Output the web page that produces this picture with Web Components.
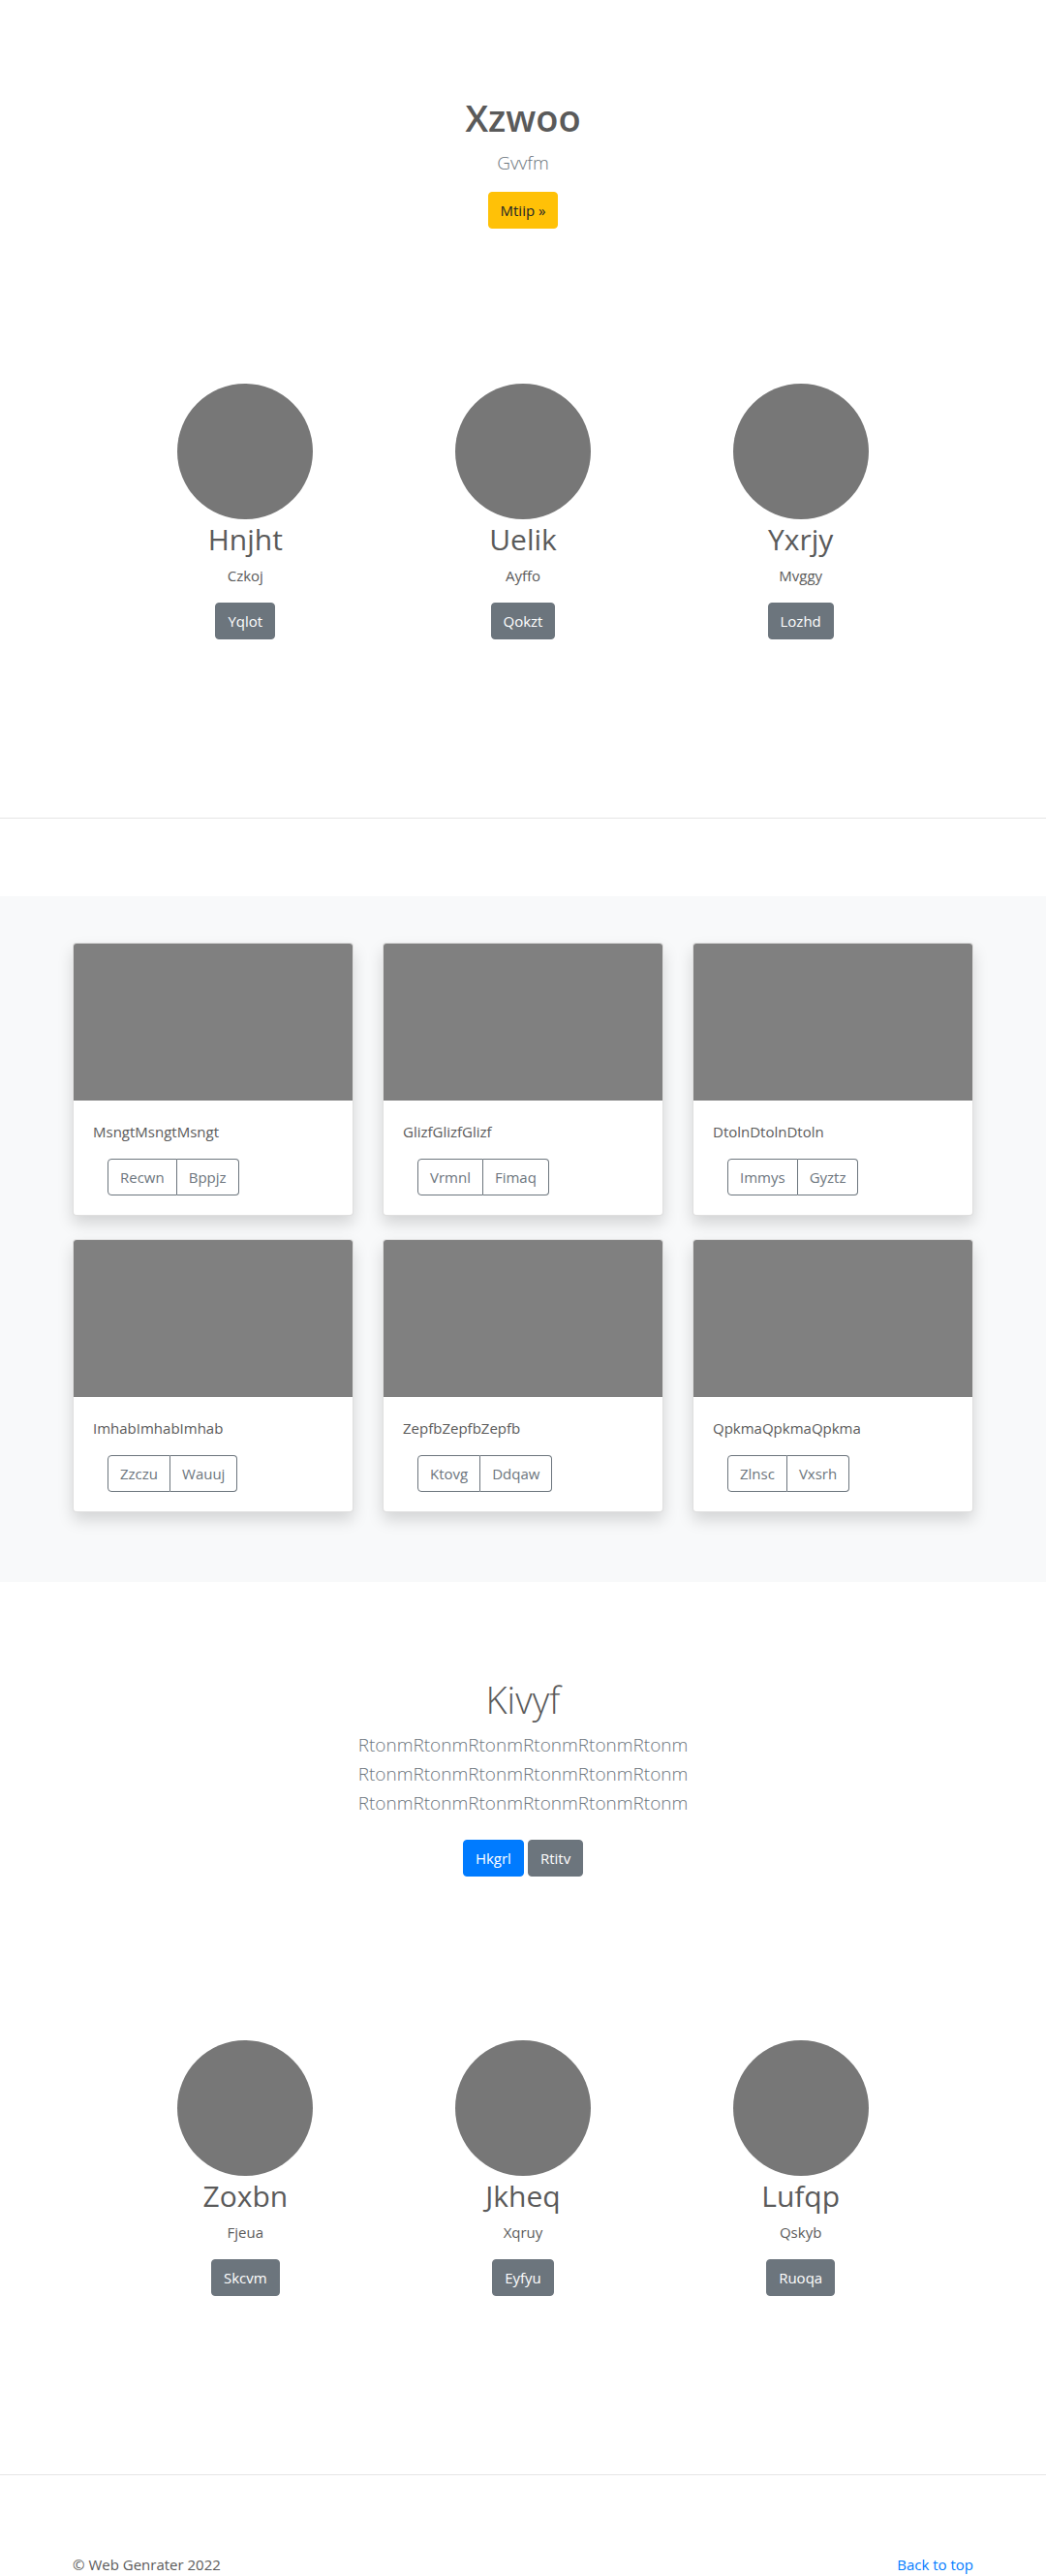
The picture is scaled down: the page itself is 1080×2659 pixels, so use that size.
<!DOCTYPE html>
<html lang="en">
<head>
<meta charset="utf-8">
<title>Web Genrater</title>
<style>
  body { margin: 0; background: #fff; color: #5a5a5a; font: 400 15px/24px "Open Sans", "Noto Sans", sans-serif; }
</style>
</head>
<body>
<site-page></site-page>
<script>
const define = (name, html) => customElements.define(name, class extends HTMLElement {
  constructor() {
    super();
    const t = document.createElement('template');
    t.innerHTML = html;
    this.attachShadow({ mode: 'open' }).append(t.content.cloneNode(true));
  }
});

define('ui-button', `
<style>
  :host { display: inline-flex; }
  button { font: inherit; line-height: 24px; color: #fff; background: #6c757d; border: 1px solid #6c757d; border-radius: 4px; padding: 6px 12px; margin: 0; cursor: pointer; white-space: nowrap; }
  :host([kind=primary]) button { background: #007bff; border-color: #007bff; }
  :host([kind=warning]) button { background: #ffc107; border-color: #ffc107; color: #212529; }
  :host([kind=outline]) button { background: transparent; color: #6c757d; }
  :host([side=start]) button { border-radius: 4px 0 0 4px; }
  :host([side=end]) button { border-radius: 0 4px 4px 0; border-left: 0; }
</style>
<button type="button"><slot></slot></button>`);

define('hero-block', `
<style>
  :host { display: block; padding: 96px 16px; text-align: center; }
  h1 { margin: 0 0 6px; font-size: 38px; line-height: 51px; font-weight: var(--title-weight, 600); }
  p { margin: 0 0 var(--lead-gap, 15px); font-size: 19px; line-height: 30px; font-weight: 300; color: #6c757d; }
  .actions { display: flex; justify-content: center; gap: 4px; }
</style>
<h1><slot name="title"></slot></h1>
<p><slot name="lead"></slot></p>
<div class="actions"><slot></slot></div>`);

define('feature-item', `
<style>
  :host { display: flex; flex-direction: column; align-items: center; text-align: center; }
  .disc { width: 140px; height: 140px; border-radius: 50%; background: #777; }
  h2 { margin: 0 0 5px; font-size: 30px; line-height: 41px; font-weight: 400; }
  p { margin: 0 0 16px; }
</style>
<div class="disc"></div>
<h2><slot name="title"></slot></h2>
<p><slot name="text"></slot></p>
<ui-button><slot></slot></ui-button>`);

define('feature-row', `
<style>
  :host { display: grid; grid-template-columns: repeat(3, 1fr); padding: 64px 110px 184px; border-bottom: 1px solid #e5e5e5; }
</style>
<slot></slot>`);

define('album-card', `
<style>
  :host { display: block; box-sizing: border-box; background: #fff; border: 1px solid rgba(0,0,0,.125); border-radius: 4px; box-shadow: 0 8px 16px rgba(0,0,0,.15); }
  .picture { height: 162px; background: #808080; border-radius: 3px 3px 0 0; }
  .body { padding: 20px; }
  p { margin: 0 0 16px; }
  .group { display: flex; padding-left: 15px; }
</style>
<div class="picture"></div>
<div class="body">
  <p><slot></slot></p>
  <div class="group">
    <ui-button kind="outline" side="start"><slot name="first"></slot></ui-button>
    <ui-button kind="outline" side="end"><slot name="second"></slot></ui-button>
  </div>
</div>`);

define('album-section', `
<style>
  :host { display: block; margin-top: 80px; padding: 48px 16px 72px; background: #f8f9fa; }
  .grid { display: grid; grid-template-columns: repeat(3, 1fr); gap: 24px 30px; max-width: 930px; margin: 0 auto; }
</style>
<div class="grid"><slot></slot></div>`);

define('site-footer', `
<style>
  :host { display: block; padding: 80px 16px 0; }
  footer { display: flex; justify-content: space-between; max-width: 930px; margin: 0 auto; }
  a { color: #007bff; text-decoration: none; }
</style>
<footer><span><slot></slot></span><a href="#"><slot name="link"></slot></a></footer>`);

const feature = ([a, b, c]) => `<feature-item><span slot="title">${a}</span><span slot="text">${b}</span>${c}</feature-item>`;
const card = ([a, b, c]) => `<album-card>${a.repeat(3)}<span slot="first">${b}</span><span slot="second">${c}</span></album-card>`;
const lead = 'Rtonm'.repeat(6);

define('site-page', `
<style>
  :host { display: block; }
  .closing { --title-weight: 300; --lead-gap: 23px; padding-bottom: 105px; }
</style>
<hero-block>
  <span slot="title">Xzwoo</span><span slot="lead">Gvvfm</span>
  <ui-button kind="warning">Mtiip »</ui-button>
</hero-block>
<feature-row>${[['Hnjht', 'Czkoj', 'Yqlot'], ['Uelik', 'Ayffo', 'Qokzt'], ['Yxrjy', 'Mvggy', 'Lozhd']].map(feature).join('')}</feature-row>
<album-section>${[['Msngt', 'Recwn', 'Bppjz'], ['Glizf', 'Vrmnl', 'Fimaq'], ['Dtoln', 'Immys', 'Gyztz'], ['Imhab', 'Zzczu', 'Wauuj'], ['Zepfb', 'Ktovg', 'Ddqaw'], ['Qpkma', 'Zlnsc', 'Vxsrh']].map(card).join('')}</album-section>
<hero-block class="closing">
  <span slot="title">Kivyf</span><span slot="lead">${lead}<br>${lead}<br>${lead}</span>
  <ui-button kind="primary">Hkgrl</ui-button><ui-button>Rtitv</ui-button>
</hero-block>
<feature-row>${[['Zoxbn', 'Fjeua', 'Skcvm'], ['Jkheq', 'Xqruy', 'Eyfyu'], ['Lufqp', 'Qskyb', 'Ruoqa']].map(feature).join('')}</feature-row>
<site-footer>© Web Genrater 2022<span slot="link">Back to top</span></site-footer>`);
</script>
</body>
</html>
